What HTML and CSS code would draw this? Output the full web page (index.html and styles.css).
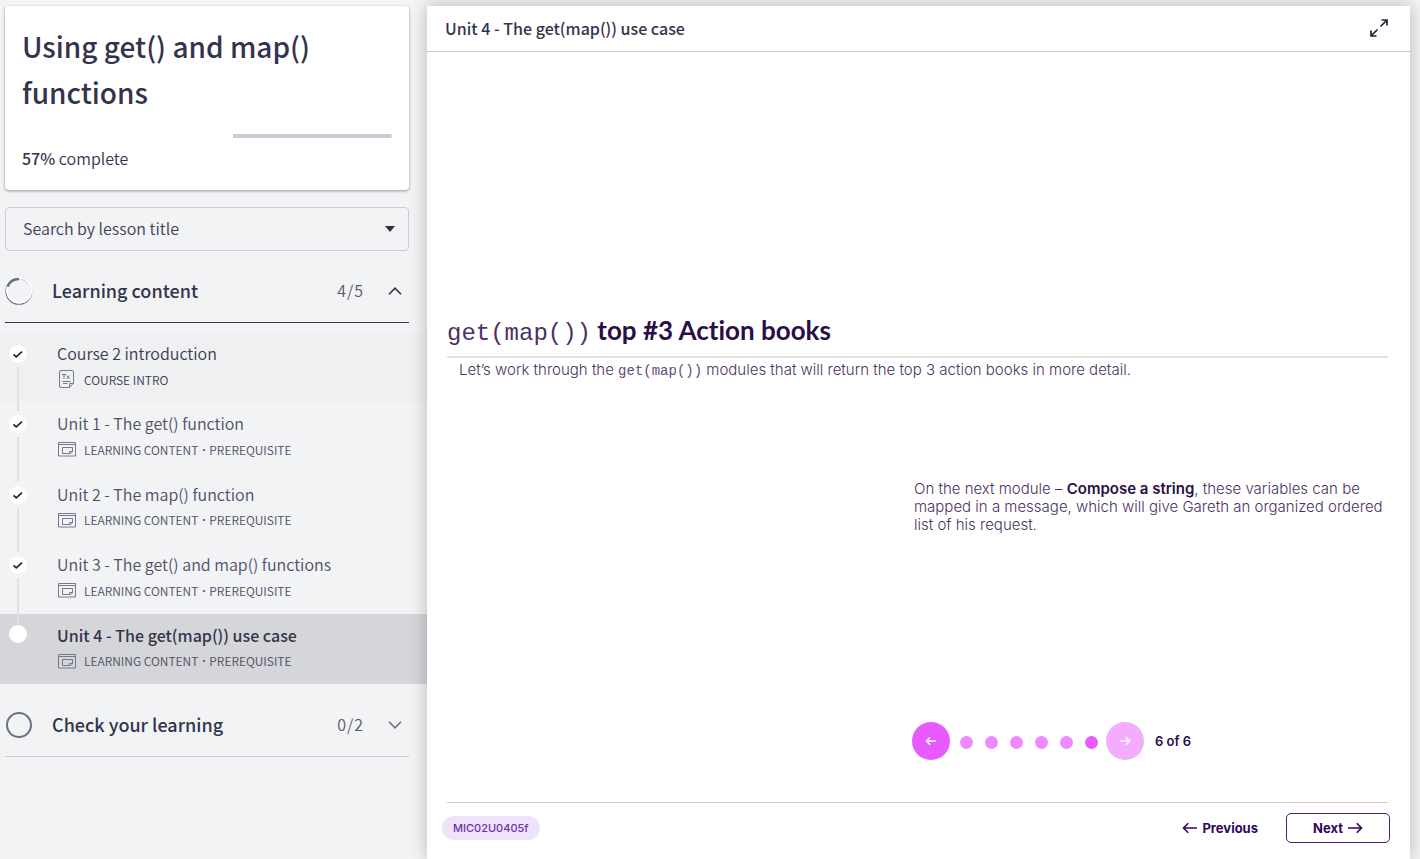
FILE: index.html
```html
<!DOCTYPE html>
<html lang="en">
<head>
<meta charset="utf-8">
<meta name="viewport" content="width=device-width, initial-scale=1">
<title>Using get() and map() functions</title>
<link rel="stylesheet" href="styles.css">
</head>
<body>
<svg class="sprite" aria-hidden="true">
  <symbol id="check" viewBox="0 0 18 18"><path d="M4.500 9.300 7.200 11.800 13 6.600" fill="none" stroke="#222" stroke-width="1.600"/></symbol>
  <symbol id="module" viewBox="0 0 20 20"><path d="M1.500 3.500h17v13.500h-17zM1.500 5.500h17M5.500 8.500h10v4.500l-2 1.500h-8zM12.500 14.500v-2h3" fill="none" stroke="currentColor"/></symbol>
  <symbol id="text-doc" viewBox="0 0 20 20"><path d="M4 1.500h11q1.500 0 1.500 1.500v11l-4 4.500H4q-1.500 0-1.500-1.500V3q0-1.500 1.500-1.500zM12.500 18.500v-4h4M5 5.500h4M7 5.500v4.500M9.500 6.500l3 3.500M12.500 6.500l-3 3.500M5.500 12.500h8M6 14.500h4.500" fill="none" stroke="currentColor"/></symbol>
  <symbol id="arrow-right" viewBox="0 0 16 12"><path d="M1 6h13.500M9.800 1.300 14.500 6 9.800 10.700" fill="none" stroke="currentColor" stroke-width="1.600"/></symbol>
  <symbol id="arrow-left" viewBox="0 0 16 12"><path d="M15 6H1.500M6.200 1.300 1.500 6l4.700 4.700" fill="none" stroke="currentColor" stroke-width="1.600"/></symbol>
  <symbol id="step-right" viewBox="0 0 12 10"><path d="M1 5h9.500M6.800 1.200 10.600 5 6.800 8.800" fill="none" stroke="currentColor" stroke-width="1.500"/></symbol>
  <symbol id="step-left" viewBox="0 0 12 10"><path d="M11 5H1.500M5.200 1.200 1.400 5l3.800 3.800" fill="none" stroke="currentColor" stroke-width="1.500"/></symbol>
</svg>
<div class="layout">
  <aside class="sidebar">
    <section class="course-card">
      <h1 class="course-title">Using get() and map() functions</h1>
      <div class="progress" role="progressbar" aria-label="Course progress" aria-valuenow="57" aria-valuemin="0" aria-valuemax="100"><div class="progress-fill" style="width:57%"></div></div>
      <p class="progress-label"><b>57%</b> complete</p>
    </section>
    <div class="search">
      <select class="search-select" aria-label="Search by lesson title"><option>Search by lesson title</option></select>
      <svg class="search-caret" viewBox="0 0 10 6"><path d="M0 0h10L5 6z" fill="#2f3048"/></svg>
    </div>
    <button class="section-head section-open" type="button" aria-expanded="true">
      <svg class="section-ring" viewBox="0 0 28 28"><circle cx="13.800" cy="14.400" r="12.800" fill="none" stroke="#6d6f86" stroke-width="1.200"/><circle cx="14.200" cy="13.600" r="12.200" fill="none" stroke="#fff" stroke-width="1.800"/><path d="M2.500 9.500A12.300 12.300 0 0 1 14 2" fill="none" stroke="#6d6f86" stroke-width="2.600"/></svg>
      <span class="section-name">Learning content</span>
      <span class="section-count">4/5</span>
      <svg class="chevron" viewBox="0 0 14 8"><path d="M1 7.200 7 1.200l6 6" fill="none" stroke="currentColor" stroke-width="1.600"/></svg>
    </button>
    <ul class="lessons">
      <li><a class="lesson lesson-first" href="#intro"><span class="rail"><svg class="dot"><use href="#check"/></svg></span><span class="lesson-text"><span class="lesson-title">Course 2 introduction</span><span class="lesson-meta"><svg class="meta-icon"><use href="#text-doc"/></svg>COURSE INTRO</span></span></a></li>
      <li><a class="lesson" href="#unit1"><span class="rail"><svg class="dot"><use href="#check"/></svg></span><span class="lesson-text"><span class="lesson-title">Unit 1 - The get() function</span><span class="lesson-meta"><svg class="meta-icon"><use href="#module"/></svg>LEARNING CONTENT<span class="sep">·</span>PREREQUISITE</span></span></a></li>
      <li><a class="lesson" href="#unit2"><span class="rail"><svg class="dot"><use href="#check"/></svg></span><span class="lesson-text"><span class="lesson-title">Unit 2 - The map() function</span><span class="lesson-meta"><svg class="meta-icon"><use href="#module"/></svg>LEARNING CONTENT<span class="sep">·</span>PREREQUISITE</span></span></a></li>
      <li><a class="lesson" href="#unit3"><span class="rail"><svg class="dot"><use href="#check"/></svg></span><span class="lesson-text"><span class="lesson-title">Unit 3 - The get() and map() functions</span><span class="lesson-meta"><svg class="meta-icon"><use href="#module"/></svg>LEARNING CONTENT<span class="sep">·</span>PREREQUISITE</span></span></a></li>
      <li><a class="lesson lesson-current" href="#unit4" aria-current="page"><span class="rail"><svg class="dot"></svg></span><span class="lesson-text"><span class="lesson-title">Unit 4 - The get(map()) use case</span><span class="lesson-meta"><svg class="meta-icon"><use href="#module"/></svg>LEARNING CONTENT<span class="sep">·</span>PREREQUISITE</span></span></a></li>
    </ul>
    <button class="section-head section-closed" type="button" aria-expanded="false">
      <svg class="section-ring" viewBox="0 0 28 28"><circle cx="14" cy="14" r="12" fill="none" stroke="#6d6f86" stroke-width="2"/></svg>
      <span class="section-name">Check your learning</span>
      <span class="section-count">0/2</span>
      <svg class="chevron" viewBox="0 0 14 8"><path d="M1 .8l6 6 6-6" fill="none" stroke="currentColor" stroke-width="1.600"/></svg>
    </button>
  </aside>
  <main class="player">
    <header class="player-head">
      <h2 class="player-title">Unit 4 - The get(map()) use case</h2>
      <button class="expand" type="button" aria-label="Full screen"><svg class="expand-icon" viewBox="0 0 20 20"><path d="M12.500 2h5.500v5.500M18 2l-6.500 6.500M2 12.500V18h5.500M2 18l6.500-6.500" fill="none" stroke="#24253d" stroke-width="1.700"/></svg></button>
    </header>
    <article class="slide">
      <h3 class="slide-title"><code>get(map())</code> top #3 Action books</h3>
      <p class="slide-intro">Let’s work through the <code>get(map())</code> modules that will return the top 3 action books in more detail.</p>
      <div class="columns">
        <div class="column-text">
          <p class="note">On the next module – <b>Compose a string</b>, these variables can be mapped in a message, which will give Gareth an organized ordered list of his request.</p>
          <nav class="pager" aria-label="Steps">
            <button class="pager-arrow" type="button" aria-label="Previous step"><svg class="pager-icon"><use href="#step-left"/></svg></button>
            <div class="pager-dots"><i></i><i></i><i></i><i></i><i></i><i class="active"></i></div>
            <button class="pager-arrow" type="button" aria-label="Next step" disabled><svg class="pager-icon"><use href="#step-right"/></svg></button>
            <span class="pager-count">6 of 6</span>
          </nav>
        </div>
      </div>
      <footer class="slide-foot">
        <span class="code-tag">MIC02U0405f</span>
        <button class="nav-button" type="button"><svg class="nav-icon"><use href="#arrow-left"/></svg>Previous</button>
        <button class="nav-button nav-next" type="button">Next<svg class="nav-icon"><use href="#arrow-right"/></svg></button>
      </footer>
    </article>
  </main>
</div>
</body>
</html>
```
FILE: styles.css
```css
* { box-sizing: border-box; }
body {
  margin: 0;
  background: #f1f3f5;
  color: #33344c;
  font-family: "Noto Sans CJK SC", "Noto Sans", sans-serif;
  font-size: 16px;
  font-weight: 350;
  overflow-x: hidden;
}
h1, h2, h3, p, ul { margin: 0; padding: 0; }
button { border: 0; padding: 0; background: none; color: inherit; font: inherit; cursor: pointer; }
.sprite { display: none; }
.layout {
  display: grid;
  grid-template-columns: 427fr 983fr;
  min-height: 100vh;
  padding: 6px 10px 0 0;
}

.sidebar { display: flex; flex-direction: column; min-width: 0; }
.course-card {
  margin: 0 18px 0 5px;
  padding: 17px 17px 18px;
  background: #fff;
  border-radius: 4px;
  box-shadow: 0 1px 3px rgba(0, 0, 0, .4);
}
.course-title { font-size: 28px; line-height: 46px; font-weight: 500; }
.progress { height: 4px; margin-top: 19px; background: #cbccd6; border-radius: 2px; }
.progress-fill { height: 100%; background: #fff; }
.progress-label { margin-top: 6px; line-height: 28px; }
.progress-label b { font-weight: 500; }
.search { position: relative; margin: 17px 18px 0 5px; }
.search-select {
  display: block;
  width: 100%;
  height: 44px;
  padding: 0 17px 3px;
  border: 1px solid #cbccd6;
  border-radius: 4px;
  appearance: none;
  background: transparent;
  color: #404158;
  font: inherit;
}
.search-caret { position: absolute; right: 14px; top: 19px; width: 10px; height: 6px; pointer-events: none; }

.section-head {
  display: flex;
  align-items: center;
  margin: 9px 18px 0 5px;
  height: 63px;
  text-align: left;
  border-bottom: 1px solid #cbccd6;
}
.section-open { border-color: #33344c; }
.section-closed { margin-top: 10px; }
.section-ring { width: 28px; height: 28px; margin-right: 19px; }
.section-name, .section-count { padding-bottom: 2px; }
.section-name { flex: 1; font-size: 18px; font-weight: 500; }
.section-count { color: #55566c; letter-spacing: 1px; }
.chevron { width: 14px; height: 8px; margin: 0 7px 0 24px; color: #33344c; }
.section-closed .chevron { color: #6d6f86; }

.lessons {
  display: grid;
  grid-auto-rows: 1fr;
  min-height: 352px;
  margin-top: 9px;
  list-style: none;
}
.lessons li { display: flex; }
.lesson { display: flex; flex: 1; color: #4e4f66; text-decoration: none; }
.lesson-first { background: #eff0f2; color: #3a3b52; }
.rail {
  position: relative;
  display: flex;
  flex-direction: column;
  align-items: center;
  gap: 4px;
  width: 36px;
  margin-right: 21px;
  padding-top: 13px;
}
.rail::after { content: ""; flex: 1; width: 2px; margin-bottom: -9px; background: #e0e1e5; }
.lesson-current .rail { padding-top: 11px; }
.lesson-current .rail::after { display: none; }
.dot { width: 18px; height: 18px; border-radius: 50%; background: #fff; }
.lesson-text { padding-top: 9px; }
.lesson-title { display: block; line-height: 24px; }
.lesson-meta { display: flex; align-items: center; height: 28px; font-size: 12px; }
.meta-icon { width: 20px; height: 20px; margin-right: 7px; color: #77788c; }
.sep { width: 11px; text-align: center; font-family: "Open Sans", sans-serif; font-weight: 700; }
.lesson-current { background: #d5d6da; }
.lesson-current .lesson-title { color: #33344c; font-weight: 500; }

.player {
  display: flex;
  flex-direction: column;
  min-width: 0;
  background: #fff;
  box-shadow: 0 0 16px rgba(0, 0, 0, .25);
}
.player-head {
  display: flex;
  align-items: center;
  justify-content: space-between;
  height: 46px;
  padding: 0 21px 2px 18px;
  border-bottom: 1px solid #cbccd6;
}
.player-title { font-size: 16px; font-weight: 500; }
.expand, .expand-icon { display: block; width: 20px; height: 20px; }
.slide {
  flex: 1;
  display: flex;
  flex-direction: column;
  padding: 258px 22px 0 20px;
  color: #4b3264;
  font-family: Inter, "Liberation Sans", sans-serif;
  font-size: 15px;
  font-weight: 300;
}
.slide code { font-family: "Liberation Mono", monospace; font-weight: 400; color: #634c7a; }
.slide-title {
  height: 48px;
  border-bottom: 2px solid #e6e0e4;
  color: #2a0f45;
  font-family: Lato, sans-serif;
  font-size: 26px;
  line-height: 40px;
  font-variant-ligatures: none;
}
.slide-title code { font-size: 24px; color: #4b3264; }
.slide-intro { padding: 3px 12px; line-height: 18px; }
.slide-intro code { font-size: 14px; }
.columns { flex: 1; display: grid; grid-template-columns: 467fr 474fr; padding-top: 97px; }
.column-text { grid-column: 2; display: flex; flex-direction: column; }
.note { line-height: 18px; }
.note b { color: #2a0f45; font-weight: 600; }
.pager { display: flex; align-items: center; margin: auto 0 42px -2px; }
.pager-arrow {
  display: grid;
  place-items: center;
  width: 38px;
  height: 38px;
  border-radius: 50%;
  background: #e859ff;
  color: #fff;
}
.pager-arrow:disabled { background: #f3adff; }
.pager-icon { width: 12px; height: 10px; }
.pager-dots { display: flex; gap: 12px; margin: 2px 8px 0 10px; }
.pager-dots i { width: 13px; height: 13px; border-radius: 50%; background: #ee8aff; }
.pager-dots .active { background: #e859ff; }
.pager-count { margin-left: 11px; color: #2a0f45; font-size: 13px; font-weight: 600; }
.slide-foot {
  display: flex;
  align-items: center;
  height: 57px;
  padding-bottom: 6px;
  border-top: 1px solid #d5c9cf;
  color: #30065e;
  font-size: 13px;
  font-weight: 700;
}
.code-tag {
  margin: 0 auto 0 -5px;
  padding: 0 11px;
  border-radius: 12px;
  background: #efe2fb;
  color: #7130a8;
  font-size: 11px;
  font-weight: 500;
  line-height: 24px;
}
.nav-button { display: flex; align-items: center; gap: 4px; }
.nav-icon { width: 16px; height: 12px; }
.nav-next {
  justify-content: center;
  width: 104px;
  height: 30px;
  margin: 0 -2px 0 28px;
  border: 1px solid #4d1c7c;
  border-radius: 5px;
}
```
